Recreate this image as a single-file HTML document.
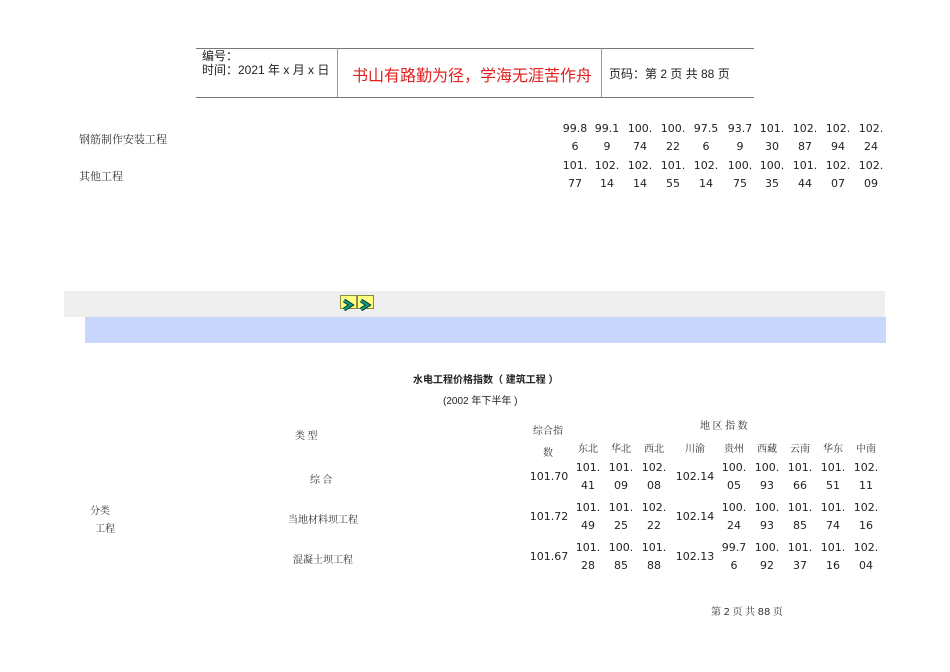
<!DOCTYPE html>
<html><head><meta charset="utf-8"><style>
body{margin:0;width:950px;height:672px;background:#fff;position:relative;overflow:hidden;font-family:"DejaVu Sans","Liberation Sans","Noto Sans CJK SC",sans-serif;color:#222}
.a{position:absolute;white-space:nowrap}
.n{position:absolute;width:40px;text-align:center;font-size:11px;line-height:18px}
.s{font-family:"Noto Serif CJK SC",serif;font-size:10px;color:#333}
.btn{position:absolute;top:295px;width:15px;height:12px;background:#ffff80;border:1px solid #8a8a40}
</style></head><body>
<div class="a" style="left:196px;top:48px;width:558px;height:48px;border-top:1px solid #777;border-bottom:1px solid #777"></div>
<div class="a" style="left:337px;top:48px;width:1px;height:49px;background:#999"></div>
<div class="a" style="left:601px;top:48px;width:1px;height:49px;background:#999"></div>
<div class="a" style="left:202px;top:49px;font-size:12px;line-height:14px;font-family:'Liberation Sans','Noto Sans CJK SC',sans-serif">编号：<br>时间：2021 年 x 月 x 日</div>
<div class="a" style="left:352px;top:62px;font-size:16px;color:#e02020;font-family:'Liberation Sans','Noto Sans CJK SC',sans-serif">书山有路勤为径，学海无涯苦作舟</div>
<div class="a" style="left:609px;top:65px;font-size:12px;font-family:'Liberation Sans','Noto Sans CJK SC',sans-serif">页码：第 2 页  共 88 页</div>

<div class="a s" style="left:79px;top:131px;font-size:11px">钢筋制作安装工程</div>
<div class="a s" style="left:79px;top:168px;font-size:11px">其他工程</div>

<div class="n" style="left:555px;top:120px">99.8<br>6</div>
<div class="n" style="left:587px;top:120px">99.1<br>9</div>
<div class="n" style="left:620px;top:120px">100.<br>74</div>
<div class="n" style="left:653px;top:120px">100.<br>22</div>
<div class="n" style="left:686px;top:120px">97.5<br>6</div>
<div class="n" style="left:720px;top:120px">93.7<br>9</div>
<div class="n" style="left:752px;top:120px">101.<br>30</div>
<div class="n" style="left:785px;top:120px">102.<br>87</div>
<div class="n" style="left:818px;top:120px">102.<br>94</div>
<div class="n" style="left:851px;top:120px">102.<br>24</div>

<div class="n" style="left:555px;top:157px">101.<br>77</div>
<div class="n" style="left:587px;top:157px">102.<br>14</div>
<div class="n" style="left:620px;top:157px">102.<br>14</div>
<div class="n" style="left:653px;top:157px">101.<br>55</div>
<div class="n" style="left:686px;top:157px">102.<br>14</div>
<div class="n" style="left:720px;top:157px">100.<br>75</div>
<div class="n" style="left:752px;top:157px">100.<br>35</div>
<div class="n" style="left:785px;top:157px">101.<br>44</div>
<div class="n" style="left:818px;top:157px">102.<br>07</div>
<div class="n" style="left:851px;top:157px">102.<br>09</div>

<div class="a" style="left:64px;top:291px;width:821px;height:26px;background:#efefef"></div>
<div class="a" style="left:85px;top:317px;width:801px;height:26px;background:#c9d7fd"></div>
<div class="btn" style="left:340px"><svg width="15" height="12"><path d="M3 1.5 L10 6 L3 10.5" stroke="#003030" stroke-width="4" fill="none"/><path d="M3 1.5 L10 6 L3 10.5" stroke="#10a080" stroke-width="2" fill="none"/></svg></div>
<div class="btn" style="left:357px"><svg width="15" height="12"><path d="M3 1.5 L10 6 L3 10.5" stroke="#003030" stroke-width="4" fill="none"/><path d="M3 1.5 L10 6 L3 10.5" stroke="#10a080" stroke-width="2" fill="none"/></svg></div>

<div class="a" style="left:413px;top:371px;font-size:10px;font-weight:bold;font-family:'Liberation Sans','Noto Sans CJK SC',sans-serif">水电工程价格指数（ 建筑工程 ）</div>
<div class="a" style="left:443px;top:392px;font-size:10px;font-family:'Liberation Sans','Noto Sans CJK SC',sans-serif">(2002 年下半年 )</div>

<div class="a s" style="left:295px;top:427px">类 型</div>
<div class="a s" style="left:533px;top:419px;line-height:22px;text-align:center">综合指<br>数</div>
<div class="a s" style="left:700px;top:417px">地 区 指 数</div>
<div class="a s" style="left:578px;top:440px">东北</div>
<div class="a s" style="left:611px;top:440px">华北</div>
<div class="a s" style="left:644px;top:440px">西北</div>
<div class="a s" style="left:685px;top:440px">川渝</div>
<div class="a s" style="left:724px;top:440px">贵州</div>
<div class="a s" style="left:757px;top:440px">西藏</div>
<div class="a s" style="left:790px;top:440px">云南</div>
<div class="a s" style="left:823px;top:440px">华东</div>
<div class="a s" style="left:856px;top:440px">中南</div>

<div class="a s" style="left:310px;top:471px">综 合</div>
<div class="a s" style="left:288px;top:511px">当地材料坝工程</div>
<div class="a s" style="left:293px;top:551px">混凝土坝工程</div>
<div class="a s" style="left:90px;top:501px;line-height:18px">分类<br>&nbsp;&nbsp;工程</div>

<div class="n" style="left:529px;top:468px;width:40px">101.70</div>
<div class="n" style="left:568px;top:459px">101.<br>41</div>
<div class="n" style="left:601px;top:459px">101.<br>09</div>
<div class="n" style="left:634px;top:459px">102.<br>08</div>
<div class="n" style="left:675px;top:468px">102.14</div>
<div class="n" style="left:714px;top:459px">100.<br>05</div>
<div class="n" style="left:747px;top:459px">100.<br>93</div>
<div class="n" style="left:780px;top:459px">101.<br>66</div>
<div class="n" style="left:813px;top:459px">101.<br>51</div>
<div class="n" style="left:846px;top:459px">102.<br>11</div>

<div class="n" style="left:529px;top:508px">101.72</div>
<div class="n" style="left:568px;top:499px">101.<br>49</div>
<div class="n" style="left:601px;top:499px">101.<br>25</div>
<div class="n" style="left:634px;top:499px">102.<br>22</div>
<div class="n" style="left:675px;top:508px">102.14</div>
<div class="n" style="left:714px;top:499px">100.<br>24</div>
<div class="n" style="left:747px;top:499px">100.<br>93</div>
<div class="n" style="left:780px;top:499px">101.<br>85</div>
<div class="n" style="left:813px;top:499px">101.<br>74</div>
<div class="n" style="left:846px;top:499px">102.<br>16</div>

<div class="n" style="left:529px;top:548px">101.67</div>
<div class="n" style="left:568px;top:539px">101.<br>28</div>
<div class="n" style="left:601px;top:539px">100.<br>85</div>
<div class="n" style="left:634px;top:539px">101.<br>88</div>
<div class="n" style="left:675px;top:548px">102.13</div>
<div class="n" style="left:714px;top:539px">99.7<br>6</div>
<div class="n" style="left:747px;top:539px">100.<br>92</div>
<div class="n" style="left:780px;top:539px">101.<br>37</div>
<div class="n" style="left:813px;top:539px">101.<br>16</div>
<div class="n" style="left:846px;top:539px">102.<br>04</div>

<div class="a s" style="left:711px;top:603px">第 <span style="font-family:'DejaVu Sans'">2</span> 页 共 <span style="font-family:'DejaVu Sans'">88</span> 页</div>
</body></html>
